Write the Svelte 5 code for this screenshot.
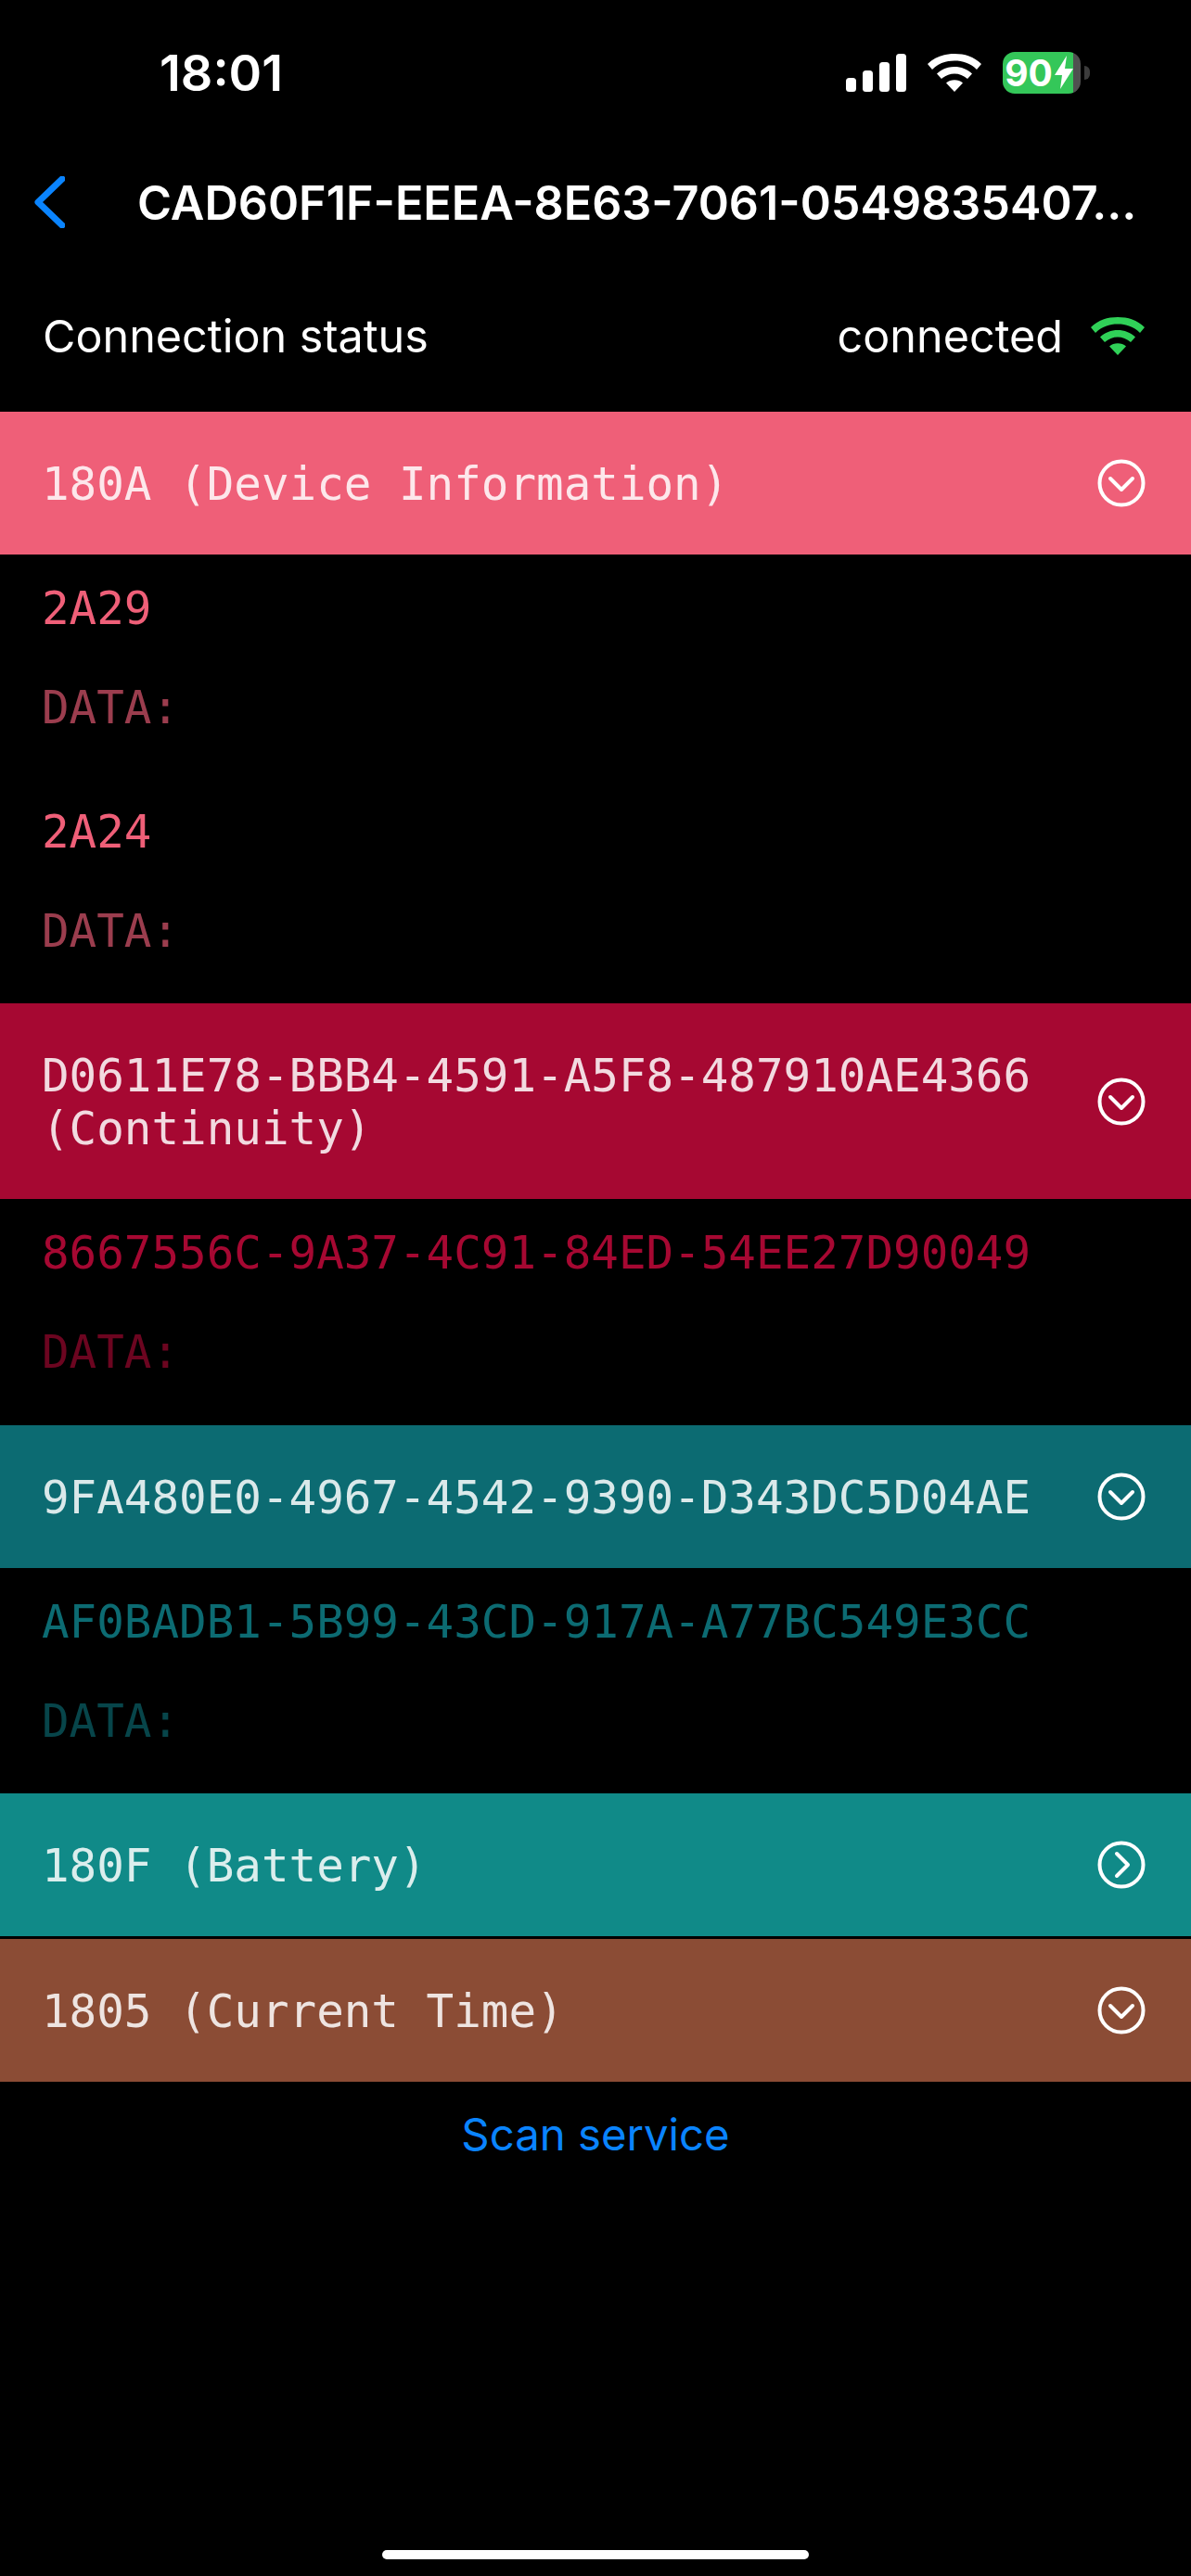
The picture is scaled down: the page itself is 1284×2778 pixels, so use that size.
<script>
  const services = [
    {
      title: ['180A (Device Information)'],
      bg: '#ef5f78',
      open: true,
      chars: ['2A29', '2A24']
    },
    {
      title: ['D0611E78-BBB4-4591-A5F8-487910AE4366', '(Continuity)'],
      bg: '#a60832',
      open: true,
      chars: ['8667556C-9A37-4C91-84ED-54EE27D90049']
    },
    {
      title: ['9FA480E0-4967-4542-9390-D343DC5D04AE'],
      bg: '#0c6b72',
      open: true,
      chars: ['AF0BADB1-5B99-43CD-917A-A77BC549E3CC']
    },
    { title: ['180F (Battery)'], bg: '#108a88', open: false, chars: [] },
    { title: ['1805 (Current Time)'], bg: '#8b4c35', open: true, chars: [] }
  ];
</script>

{#snippet wifi()}
  <svg class="wifi" viewBox="0 0 58 41" fill="currentColor">
    <path d="M0 11 C8 3 18 0 29 0 C40 0 50 3 58 11 L53 17 C46 10 38 7.500 29 7.500 C20 7.500 12 10 5 17 Z" />
    <path d="M10 21.500 C15 16.500 22 14 29 14 C36 14 43 16.500 48 21.500 L43 27 C39 23.500 34 21.500 29 21.500 C24 21.500 19 23.500 15 27 Z" />
    <path d="M20 31.500 C22.500 29.500 25.500 28.300 29 28.300 C32.500 28.300 35.500 29.500 38 31.500 L29 41 Z" />
  </svg>
{/snippet}

<div class="screen">
  <header class="status-bar">
    <span class="time">18:01</span>
    <div class="indicators">
      <svg class="signal" viewBox="0 0 65 41" fill="#fff">
        <rect x="0" y="26" width="11" height="15" rx="3.500" />
        <rect x="18" y="18" width="11" height="23" rx="3.500" />
        <rect x="36" y="9" width="11" height="32" rx="3.500" />
        <rect x="54" y="0" width="11" height="41" rx="3.500" />
      </svg>
      {@render wifi()}
      <div class="battery">
        <div class="battery-body">
          <span>90</span>
          <svg class="bolt" viewBox="0 0 20 36" fill="#fff">
            <path d="M13 0 L0 21 H8 L6 36 L20 14 H11 Z" />
          </svg>
        </div>
        <div class="battery-nub"></div>
      </div>
    </div>
  </header>

  <nav class="nav-bar">
    <svg class="back" viewBox="0 0 33 56" fill="none" stroke="#0a84ff" stroke-width="7" stroke-linecap="round" stroke-linejoin="round">
      <path d="M30 3 L4 28 L30 53" />
    </svg>
    <h1>CAD60F1F-EEEA-8E63-7061-0549835407…</h1>
  </nav>

  <div class="connection">
    <span>Connection status</span>
    <div class="connected">
      <span>connected</span>
      {@render wifi()}
    </div>
  </div>

  {#each services as service}
    <section>
      <button class="service" style="background: {service.bg}">
        <span class="service-title">
          {#each service.title as line}
            <span class="line">{line}</span>
          {/each}
        </span>
        <svg class="toggle" viewBox="0 0 52 52" fill="none" stroke="#fff" stroke-width="4" stroke-linecap="round" stroke-linejoin="round">
          <circle cx="26" cy="26" r="23.500" />
          {#if service.open}
            <path d="M14 21 L26 33 L38 21" />
          {:else}
            <path d="M21 14 L33 26 L21 38" />
          {/if}
        </svg>
      </button>
      {#each service.chars as char}
        <div class="characteristic" style="color: {service.bg}">
          <div class="uuid">{char}</div>
          <div class="data">DATA:</div>
        </div>
      {/each}
    </section>
  {/each}

  <button class="scan">Scan service</button>

  <div class="home-indicator"></div>
</div>

<style>
  :global(body) {
    margin: 0;
    background: #000;
  }

  .screen {
    position: relative;
    height: 2778px;
    background: #000;
    color: #fff;
    font-family: Inter, "Liberation Sans", sans-serif;
    overflow: hidden;
  }

  .status-bar {
    display: flex;
    align-items: center;
    justify-content: space-between;
    height: 156px;
    padding: 0 109px 0 172px;
    box-sizing: border-box;
  }

  .time {
    font-size: 54px;
    font-weight: 600;
  }

  .indicators {
    display: flex;
    align-items: center;
    gap: 23px;
  }

  .signal {
    width: 65px;
    height: 41px;
  }

  .wifi {
    width: 58px;
    height: 41px;
  }

  .battery {
    display: flex;
    align-items: center;
    gap: 4px;
  }

  .battery-body {
    display: flex;
    align-items: center;
    justify-content: center;
    gap: 2px;
    width: 84px;
    height: 45px;
    box-sizing: border-box;
    padding-right: 6px;
    border-radius: 13px;
    background: linear-gradient(to right, #34c759 90%, #505050 90%);
    font-size: 39px;
    font-weight: 700;
  }

  .bolt {
    width: 20px;
    height: 36px;
  }

  .battery-nub {
    width: 6px;
    height: 15px;
    border-radius: 0 8px 8px 0;
    background: #3c3c3c;
  }

  .nav-bar {
    display: flex;
    align-items: center;
    gap: 78px;
    height: 124px;
    padding-left: 37px;
  }

  .back {
    flex: none;
    width: 33px;
    height: 56px;
  }

  h1 {
    margin: 0;
    font-size: 50.300px;
    font-weight: 600;
    white-space: nowrap;
  }

  .connection {
    display: flex;
    align-items: center;
    justify-content: space-between;
    height: 164px;
    padding: 0 50px 0 46px;
    font-size: 48.500px;
  }

  .connected {
    display: flex;
    align-items: center;
    gap: 30px;
    color: #fff;
  }

  .connected .wifi {
    color: #30d158;
  }

  .service {
    display: flex;
    align-items: center;
    justify-content: space-between;
    width: 100%;
    padding: 50px 49px 47px 45px;
    border: 0;
    color: rgba(255, 255, 255, 0.85);
    font-family: "DejaVu Sans Mono", monospace;
    font-size: 49.200px;
    text-align: left;
  }

  .service-title .line {
    display: block;
    line-height: 57px;
  }

  .toggle {
    flex: none;
    width: 52px;
    height: 52px;
    margin-top: -3px;
  }

  .characteristic {
    height: 240.500px;
    padding: 29px 45px 0;
    box-sizing: border-box;
    font-family: "DejaVu Sans Mono", monospace;
    font-size: 49.200px;
  }

  .uuid {
    line-height: 58px;
  }

  .data {
    margin-top: 49px;
    line-height: 58px;
    opacity: 0.65;
  }

  section + section {
    margin-top: 3px;
  }

  .scan {
    display: block;
    width: 100%;
    margin-top: 28px;
    padding: 0;
    border: 0;
    background: none;
    color: #0a84ff;
    font-family: inherit;
    font-size: 47.300px;
    line-height: 58px;
    text-align: center;
  }

  .home-indicator {
    position: absolute;
    left: 412px;
    bottom: 18px;
    width: 460px;
    height: 10px;
    border-radius: 5px;
    background: #fff;
  }
</style>
